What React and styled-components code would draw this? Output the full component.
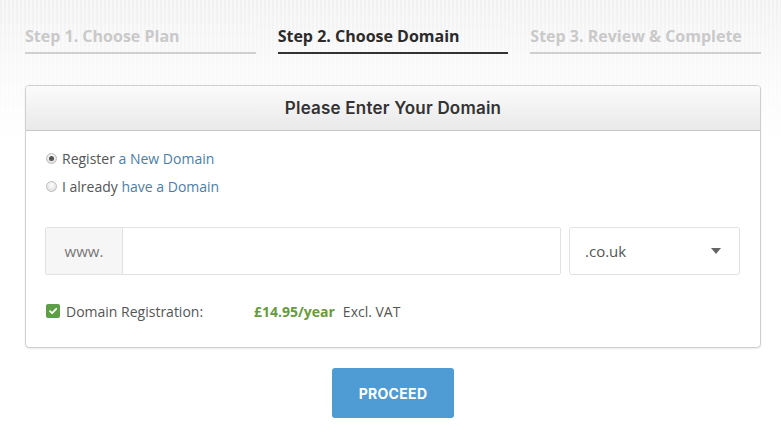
import React from "react";
import styled, { createGlobalStyle } from "styled-components";

const Global = createGlobalStyle`
  html, body { margin: 0; padding: 0; }
  body {
    width: 781px;
    height: 436px;
    overflow: hidden;
    font-family: "Open Sans", "Liberation Sans", sans-serif;
    background:
      linear-gradient(to bottom, rgba(255,255,255,0) 0px, rgba(255,255,255,0.6) 70px, #fff 140px),
      repeating-linear-gradient(90deg, #f1f1f1 0px, #f1f1f1 2px, #f7f7f7 2px, #f7f7f7 4px);
  }
`;

const Page = styled.div`
  width: 736px;
  padding: 0 20px 0 25px;
  display: flex;
  flex-direction: column;
  align-items: stretch;
`;

const Steps = styled.div`
  display: grid;
  grid-template-columns: repeat(3, 1fr);
  column-gap: 22px;
  padding-top: 24px;
  margin-bottom: 31px;
`;

const Step = styled.div`
  font-family: "Open Sans", sans-serif;
  font-weight: 700;
  font-size: 16px;
  letter-spacing: 0px;
  line-height: 24px;
  color: ${(p) => (p.$active ? "#2b2b2b" : "#c9c9c9")};
  padding-bottom: 4px;
  border-bottom: 2px solid ${(p) => (p.$active ? "#333" : "#cfcfcf")};
`;

const Card = styled.div`
  border: 1px solid #cfcfcf;
  border-radius: 4px;
  background: #fff;
  box-shadow: 0 1px 2px rgba(0,0,0,0.08);
  overflow: hidden;
`;

const CardHeader = styled.div`
  height: 44px;
  display: flex;
  align-items: center;
  justify-content: center;
  background: linear-gradient(to bottom, #fbfbfb, #e9e9e9);
  border-bottom: 1px solid #c6c6c6;
  font-family: "Inter", sans-serif;
  font-weight: 600;
  font-size: 17px;
  letter-spacing: 0.2px;
  color: #333;
`;

const CardBody = styled.div`
  padding: 13px 20px 24px 19px;
`;

const RadioRow = styled.label`
  display: flex;
  align-items: center;
  height: 28px;
  font-size: 14px;
  color: #555;
  gap: 5px;
  padding-left: 1px;
`;

const RadioDot = styled.span`
  width: 11px;
  height: 11px;
  border-radius: 50%;
  border: 1px solid #bdbdbd;
  background: radial-gradient(circle at 50% 35%, #fdfdfd, #d9d9d9);
  display: inline-flex;
  align-items: center;
  justify-content: center;
  box-sizing: border-box;
  &::after {
    content: "";
    width: 5px;
    height: 5px;
    border-radius: 50%;
    background: ${(p) => (p.$checked ? "#555" : "transparent")};
  }
`;

const Link = styled.span`
  color: #4b7ea8;
`;

const InputRow = styled.div`
  display: flex;
  gap: 8px;
  margin-top: 27px;
  height: 48px;
`;

const InputGroup = styled.div`
  flex: 1;
  display: flex;
  border: 1px solid #e2e2e2;
  border-radius: 2px;
`;

const Addon = styled.div`
  width: 76px;
  background: #f6f6f6;
  border-right: 1px solid #e2e2e2;
  display: flex;
  align-items: center;
  justify-content: center;
  font-size: 15px;
  color: #777;
`;

const TextInput = styled.div`
  flex: 1;
  background: #fff;
`;

const Select = styled.div`
  width: 171px;
  border: 1px solid #e2e2e2;
  border-radius: 3px;
  display: flex;
  align-items: center;
  justify-content: space-between;
  padding: 0 18px 0 15px;
  box-sizing: border-box;
  font-size: 15px;
  color: #555;
`;

const Caret = styled.span`
  width: 0;
  height: 0;
  border-left: 5px solid transparent;
  border-right: 5px solid transparent;
  border-top: 6px solid #666;
`;

const RegRow = styled.div`
  display: flex;
  align-items: center;
  margin-top: 24px;
  height: 24px;
  font-size: 14px;
  color: #555;
`;

const Check = styled.span`
  width: 14px;
  height: 14px;
  border-radius: 2px;
  background: #5d9f46;
  display: inline-flex;
  align-items: center;
  justify-content: center;
  margin-right: 6px;
  margin-left: 1px;
`;

const RegLabel = styled.span`
  width: 188px;
`;

const Price = styled.span`
  font-weight: 700;
  color: #679b3b;
  margin-right: 8px;
`;

const ButtonWrap = styled.div`
  display: flex;
  justify-content: center;
  margin-top: 20px;
`;

const Button = styled.button`
  width: 122px;
  height: 50px;
  border: none;
  border-radius: 3px;
  background: #4f9bd4;
  color: #fff;
  font-family: "Inter", sans-serif;
  font-weight: 700;
  font-size: 14px;
  letter-spacing: 0.3px;
  cursor: pointer;
`;

export default function App() {
  return (
    <>
      <Global />
      <Page>
        <Steps>
          <Step>Step 1. Choose Plan</Step>
          <Step $active>Step 2. Choose Domain</Step>
          <Step>Step 3. Review &amp; Complete</Step>
        </Steps>
        <Card>
          <CardHeader>Please Enter Your Domain</CardHeader>
          <CardBody>
            <RadioRow>
              <RadioDot $checked />
              <span>
                Register <Link>a New Domain</Link>
              </span>
            </RadioRow>
            <RadioRow>
              <RadioDot />
              <span>
                I already <Link>have a Domain</Link>
              </span>
            </RadioRow>
            <InputRow>
              <InputGroup>
                <Addon>www.</Addon>
                <TextInput />
              </InputGroup>
              <Select>
                <span>.co.uk</span>
                <Caret />
              </Select>
            </InputRow>
            <RegRow>
              <Check>
                <svg width="10" height="10" viewBox="0 0 10 10">
                  <path d="M2 5.2 L4.1 7.2 L8.2 2.8" fill="none" stroke="#fff" strokeWidth="1.8" strokeLinecap="round" strokeLinejoin="round" />
                </svg>
              </Check>
              <RegLabel>Domain Registration:</RegLabel>
              <Price>£14.95/year</Price>
              <span>Excl. VAT</span>
            </RegRow>
          </CardBody>
        </Card>
        <ButtonWrap>
          <Button>PROCEED</Button>
        </ButtonWrap>
      </Page>
    </>
  );
}
